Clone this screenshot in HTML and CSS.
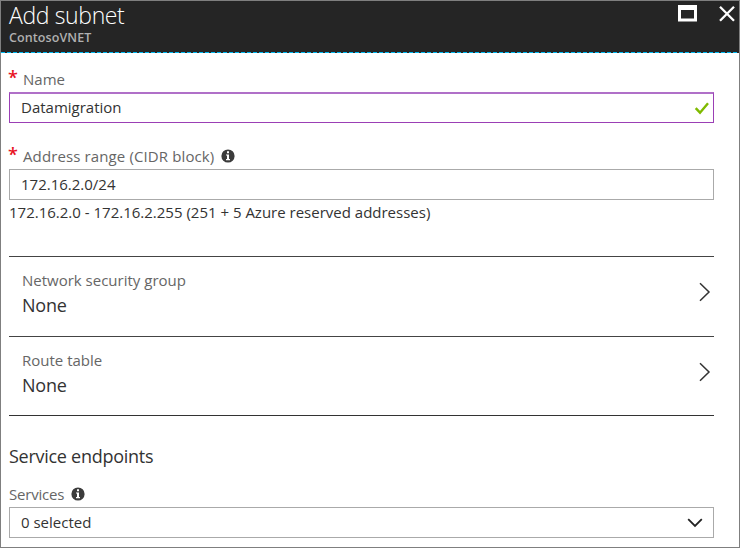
FILE: index.html
```html
<!DOCTYPE html>
<html lang="en">
<head>
<meta charset="utf-8">
<title>Add subnet</title>
<link rel="stylesheet" href="styles.css">
</head>
<body>
<main class="blade">
  <header class="blade-header">
    <div class="heading">
      <h1 class="title">Add subnet</h1>
      <p class="subtitle">ContosoVNET</p>
    </div>
    <div class="window-actions">
      <svg class="icon-maximize" width="20" height="18" viewBox="0 0 20 18"><path fill="#fff" fill-rule="evenodd" d="M0 0h19v16.500H0zM3 5v8.500h13V5z"/></svg>
      <svg class="icon-close" width="18" height="18" viewBox="0 0 18 18"><path d="M2 1.700 16 15.700M16 1.700 2 15.700" stroke="#fff" stroke-width="2.300" fill="none"/></svg>
    </div>
  </header>
  <div class="blade-body">
    <div class="field-label first"><span class="required">*</span><span class="label-text">Name</span></div>
    <div class="field focused">
      <span class="field-value">Datamigration</span>
      <svg class="icon-check" width="16" height="14" viewBox="0 0 16 14"><path d="M1.700 7.200 6 11.700 14 2.200" stroke="#7fba00" stroke-width="2.400" fill="none"/></svg>
    </div>
    <div class="field-label second"><span class="required">*</span><span class="label-text address">Address range (CIDR block)</span>
      <svg class="icon-info" width="14" height="14" viewBox="0 0 14 14"><circle cx="7" cy="7" r="6.600" fill="#3c3c3c"/><path fill="#fff" d="M6 2.300h2v2H6zM5 5.500h3v4.500h1v1.200H5V10h1V6.600H5z"/></svg>
    </div>
    <div class="field"><span class="field-value">172.16.2.0/24</span></div>
    <p class="help">172.16.2.0 - 172.16.2.255 (251 + 5 Azure reserved addresses)</p>
    <div class="selectors">
      <div class="selector">
        <div><div class="selector-label">Network security group</div><div class="selector-value">None</div></div>
        <svg class="icon-chevron" width="12" height="20" viewBox="0 0 12 20"><path d="M1 1.200 10 10 1 18.800" stroke="#333" stroke-width="1.500" fill="none"/></svg>
      </div>
      <div class="selector">
        <div><div class="selector-label">Route table</div><div class="selector-value">None</div></div>
        <svg class="icon-chevron" width="12" height="20" viewBox="0 0 12 20"><path d="M1 1.200 10 10 1 18.800" stroke="#333" stroke-width="1.500" fill="none"/></svg>
      </div>
    </div>
    <h2 class="section-title">Service endpoints</h2>
    <div class="field-label services"><span class="label-text services-text">Services</span>
      <svg class="icon-info" width="14" height="14" viewBox="0 0 14 14"><circle cx="7" cy="7" r="6.600" fill="#3c3c3c"/><path fill="#fff" d="M6 2.300h2v2H6zM5 5.500h3v4.500h1v1.200H5V10h1V6.600H5z"/></svg>
    </div>
    <div class="field select">
      <span class="field-value">0 selected</span>
      <svg class="icon-down" width="16" height="10" viewBox="0 0 16 10"><path d="M1.200 1.200 8 8 14.800 1.200" stroke="#222" stroke-width="1.800" fill="none"/></svg>
    </div>
  </div>
</main>
</body>
</html>
```
FILE: styles.css
```css
* { box-sizing: border-box; }
body { margin: 0; background: #fff; font-family: "Open Sans", "Noto Sans", sans-serif; font-size: 15px; color: #333; }
h1, h2, p { margin: 0; font-weight: 400; }
svg { display: block; flex: none; }
.blade { width: 740px; height: 548px; border: 1px solid #7f7f7f; background: #fff; overflow: hidden; }
.blade-header { display: flex; justify-content: space-between; height: 52px; padding-left: 8px; background: repeating-linear-gradient(90deg, #00b8f0 0 4px, #252525 4px 6px) 0 100% / 100% 1px no-repeat, #252525; }
.title { height: 29px; line-height: 29px; font-size: 23px; font-weight: 300; letter-spacing: -.36px; color: #fff; white-space: nowrap; }
.subtitle { height: 16px; line-height: 15px; font-size: 12.500px; font-weight: 600; letter-spacing: .1px; color: #b0b0b0; }
.window-actions { display: flex; gap: 20px; padding: 4px 3px 0 0; }
.blade-body { padding: 0 25px 0 8px; }
.field-label { display: flex; align-items: center; height: 39px; color: #666; line-height: 24px; white-space: nowrap; }
.label-text { margin-top: -2px; }
.first { padding-top: 15px; }
.second { height: 46px; padding-top: 22px; }
.address { letter-spacing: .12px; }
.required { width: 14px; height: 24px; margin-left: -1px; margin-right: 1px; font-size: 18px; font-weight: 600; line-height: 19px; color: #e81123; }
.icon-info { margin-left: 7px; margin-top: -2px; }
.field { display: flex; align-items: center; justify-content: space-between; height: 31px; padding: 0 11px; border: 1px solid #aaa; }
.field-value { margin-top: -2px; }
.focused { border-color: #9b3fb5; border-top: 2px solid #b070c8; padding-right: 3px; }
.focused .field-value { margin-top: -3px; }
.help { height: 26px; line-height: 24px; margin-bottom: 30px; white-space: nowrap; }
.selectors { border-bottom: 1px solid #333; }
.selector { display: flex; justify-content: space-between; height: 79.500px; padding: 11px 3px 0 13px; border-top: 1px solid #444; }
.selector-label { line-height: 24px; color: #666; }
.selector-value { line-height: 27px; font-size: 18px; letter-spacing: -.2px; }
.icon-chevron { margin-top: 14px; }
.section-title { margin-top: 26px; height: 29px; line-height: 28px; font-size: 18px; letter-spacing: -.27px; }
.services { height: 36px; padding-top: 11px; }
.services-text { letter-spacing: -.2px; margin-top: -2px; }
.services .icon-info { margin-top: -2px; }
.select { padding-right: 10px; }
```
